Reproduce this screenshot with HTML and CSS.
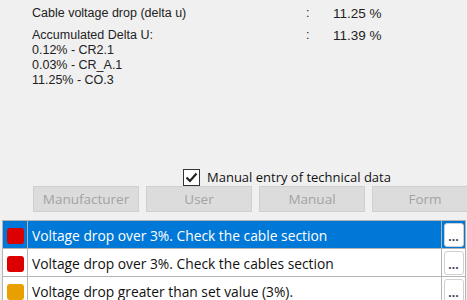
FILE: index.html
```html
<!DOCTYPE html>
<html>
<head>
    <meta charset="utf-8">
    <title>Voltage drop</title>
    <link rel="stylesheet" href="styles.css">
</head>
<body>
    <div class="results">
        <div class="result-row">
            <div class="result-label">Cable voltage drop (delta u)</div>
            <div class="result-colon">:</div>
            <div class="result-value">11.25 %</div>
        </div>
        <div class="result-row accumulated">
            <div class="result-label">
                Accumulated Delta U:<br>
                0.12% - CR2.1<br>
                0.03% - CR_A.1<br>
                11.25% - CO.3
            </div>
            <div class="result-colon">:</div>
            <div class="result-value">11.39 %</div>
        </div>
    </div>

    <div class="manual-entry">
        <label class="check">
            <span class="check-box">
                <svg width="13" height="11" viewBox="0 0 13 11"><path d="M1.5 5.5 L5 9 L11.5 1.5" fill="none" stroke="#222" stroke-width="2.2"/></svg>
            </span>
            Manual entry of technical data
        </label>
    </div>

    <div class="source-buttons">
        <button type="button" disabled>Manufacturer</button>
        <button type="button" disabled>User</button>
        <button type="button" disabled>Manual</button>
        <button type="button" disabled>Form</button>
    </div>

    <table class="messages">
        <tr class="selected">
            <td class="status"><span class="dot red"></span></td>
            <td class="message">Voltage drop over 3%. Check the cable section</td>
            <td class="more"><button type="button">...</button></td>
        </tr>
        <tr>
            <td class="status"><span class="dot red"></span></td>
            <td class="message">Voltage drop over 3%. Check the cables section</td>
            <td class="more"><button type="button">...</button></td>
        </tr>
        <tr>
            <td class="status"><span class="dot orange"></span></td>
            <td class="message">Voltage drop greater than set value (3%).</td>
            <td class="more"><button type="button">...</button></td>
        </tr>
    </table>
</body>
</html>
```

FILE: styles.css
```css
body {
    margin: 0;
    background-color: #f0f0f0;
    font-family: "Liberation Sans", Arial, sans-serif;
    font-size: 12.5px;
    color: #222;
    overflow: hidden;
    height: 300px;
}
.results {
    padding: 6px 0 0 32px;
}
.result-row {
    display: grid;
    grid-template-columns: 274px 27px auto;
    line-height: 15px;
}
.result-value {
    font-size: 13.5px;
}
.result-row.accumulated {
    margin-top: 7px;
}
.manual-entry {
    margin-top: 80px;
    padding-left: 183px;
    height: 18px;
}
.check {
    display: flex;
    align-items: center;
    font-family: "Open Sans", sans-serif;
    font-size: 13px;
    color: #111;
}
.check-box {
    width: 15px;
    height: 15px;
    border: 1px solid #333;
    background: white;
    margin-right: 7px;
    display: flex;
    align-items: center;
    justify-content: center;
}
.source-buttons {
    display: flex;
    gap: 7px;
    margin: 0 0 0 33px;
    overflow: hidden;
}
.source-buttons button {
    flex: 0 0 106px;
    height: 26px;
    background: #dcdcdc;
    border: 1px solid #cfcfcf;
    color: #a3a3a3;
    font-family: "Open Sans", sans-serif;
    font-size: 13.5px;
    padding: 0;
}
.messages {
    margin: 8px 0 0 2px;
    width: 464px;
    border-collapse: collapse;
    background: white;
    font-family: "Open Sans", sans-serif;
    font-size: 13.8px;
}
.messages td {
    height: 27px;
    padding: 0;
    border: 1px solid #b4b4b4;
}
.messages .status {
    width: 24px;
    text-align: center;
}
.messages .message {
    padding: 2px 0 0 4px;
    height: 25px;
    color: #111;
}
.messages .more {
    width: 23px;
    text-align: center;
}
.messages tr.selected td {
    background: #0078d7;
    color: white;
}
.dot {
    display: inline-block;
    width: 17px;
    height: 16px;
    border-radius: 3px;
    vertical-align: middle;
}
.dot.red {
    background: #dc0000;
}
.dot.orange {
    background: #e8a000;
}
.more button {
    width: 20px;
    height: 24px;
    background: white;
    border: 1px solid #d0d0d0;
    border-radius: 3px;
    padding: 4px 0 0;
    font-family: "Open Sans", sans-serif;
    font-size: 12px;
    font-weight: bold;
    line-height: 14px;
    color: #3a3a55;
    vertical-align: middle;
}
```
